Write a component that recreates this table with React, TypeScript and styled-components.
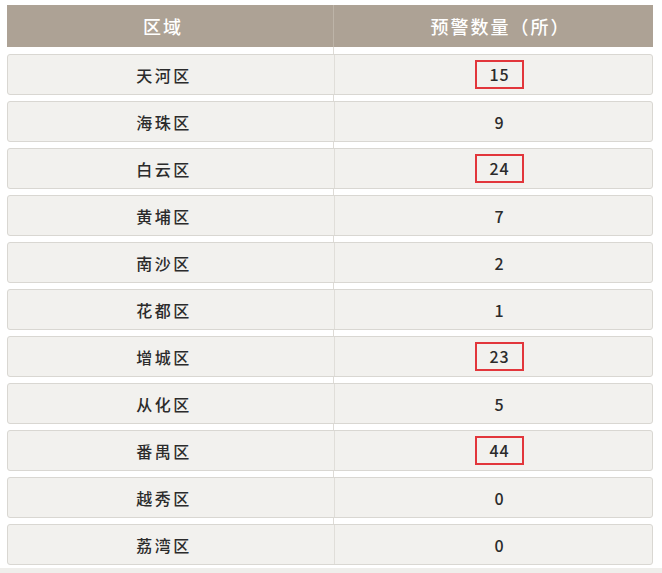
import styled, { createGlobalStyle } from 'styled-components';

const GlobalStyle = createGlobalStyle`
  body {
    margin: 0;
    background: #ffffff;
    font-family: "Noto Sans CJK SC", "Noto Sans", sans-serif;
  }
`;

const Page = styled.div`
  width: 662px;
  height: 573px;
  padding: 5px 9px 0 7px;
  box-sizing: border-box;
  display: flex;
  flex-direction: column;
  overflow: hidden;
`;

const Table = styled.div`
  display: flex;
  flex-direction: column;
  gap: 6px;
  background-image: linear-gradient(#dedbd6, #dedbd6);
  background-size: 1px 100%;
  background-position: 326px 0;
  background-repeat: no-repeat;
`;

const HeaderRow = styled.div`
  display: grid;
  grid-template-columns: 326px 1fr;
  height: 42px;
  margin-bottom: 1px;
  background: #ada295;
  color: #ffffff;
  font-size: 18px;
  font-weight: 500;
  letter-spacing: 2px;
`;

const HeaderCell = styled.div<{ $first?: boolean }>`
  display: flex;
  align-items: center;
  justify-content: center;
  padding: ${(p) => (p.$first ? '0 14px 0 0' : '0 0 0 14px')};
  border-left: ${(p) => (p.$first ? 'none' : '1px solid #bdb4a8')};
`;

const Row = styled.div`
  display: grid;
  grid-template-columns: 326px 1fr;
  height: 41px;
  box-sizing: border-box;
  background: #f2f1ee;
  border: 1px solid #d9d7d2;
  border-radius: 3px;
  color: #2b2b2b;
  font-size: 16px;
  font-weight: 500;
`;

const Cell = styled.div<{ $first?: boolean }>`
  display: flex;
  align-items: center;
  justify-content: center;
  letter-spacing: ${(p) => (p.$first ? '2.5px' : '1px')};
  padding: ${(p) => (p.$first ? '0 14px 0 0' : '0 0 0 12px')};
  border-left: ${(p) => (p.$first ? 'none' : '1px solid #e0ded9')};
`;

const Flag = styled.span`
  display: inline-block;
  padding: 0 12px;
  line-height: 25px;
  border: 2px solid #e2363b;
`;

const BottomStrip = styled.div`
  margin-top: auto;
  margin-left: -7px;
  margin-right: -9px;
  height: 5px;
  background: #efeeeb;
`;

type District = { name: string; count: number; flagged?: boolean };

const districts: District[] = [
  { name: '天河区', count: 15, flagged: true },
  { name: '海珠区', count: 9 },
  { name: '白云区', count: 24, flagged: true },
  { name: '黄埔区', count: 7 },
  { name: '南沙区', count: 2 },
  { name: '花都区', count: 1 },
  { name: '增城区', count: 23, flagged: true },
  { name: '从化区', count: 5 },
  { name: '番禺区', count: 44, flagged: true },
  { name: '越秀区', count: 0 },
  { name: '荔湾区', count: 0 },
];

export default function App() {
  return (
    <>
      <GlobalStyle />
      <Page>
        <Table>
          <HeaderRow>
            <HeaderCell $first>区域</HeaderCell>
            <HeaderCell>预警数量（所）</HeaderCell>
          </HeaderRow>
          {districts.map((d) => (
            <Row key={d.name}>
              <Cell $first>{d.name}</Cell>
              <Cell>{d.flagged ? <Flag>{d.count}</Flag> : d.count}</Cell>
            </Row>
          ))}
        </Table>
        <BottomStrip />
      </Page>
    </>
  );
}
